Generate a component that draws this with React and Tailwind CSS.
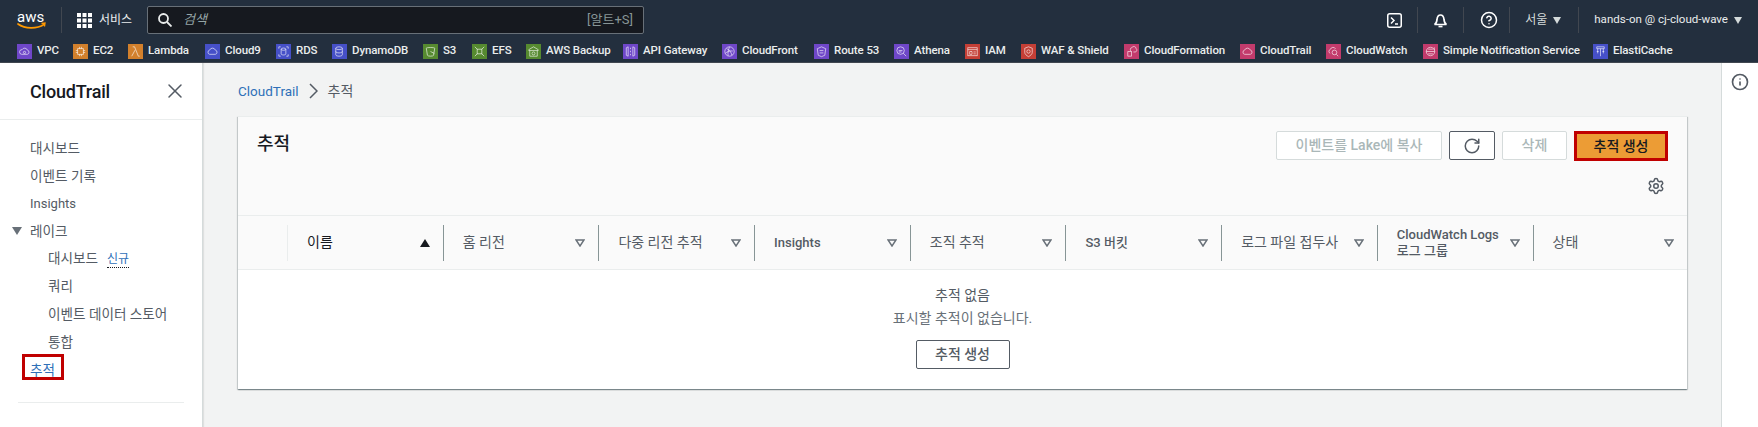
import React from 'react';
import { RotateCw, Settings, X, HelpCircle, Info } from 'lucide-react';

const FONT = "font-['Roboto','Noto_Sans_CJK_KR',sans-serif]";

// glyph drawn in white on each service tile (16 box)
const glyphs = {
  vpc: <><path d="M5 11a2.5 2.5 0 0 1 .5-5 3 3 0 0 1 5.5.5 2.3 2.3 0 0 1 0 4.5z" /><circle cx="8" cy="9" r="1.2" /></>,
  ec2: <><rect x="5" y="5" width="6" height="6" /><path d="M7 3v2M9 3v2M7 11v2M9 11v2M3 7h2M3 9h2M11 7h2M11 9h2" /></>,
  lambda: <path d="M5 3h2l4 10h1.5M7.5 6.5 4 13" />,
  cloud9: <path d="M5 11a2.3 2.3 0 0 1 0-4.5 3.2 3.2 0 0 1 6 0 2.3 2.3 0 0 1 0 4.5z" />,
  rds: <><ellipse cx="8" cy="5.5" rx="2.5" ry="1.2" /><path d="M5.5 5.5v5c0 .7 1.1 1.2 2.5 1.2s2.5-.5 2.5-1.2v-5M3 3v2M3 3h2M13 3v2M13 3h-2M3 13v-2M3 13h2M13 13v-2M13 13h-2" /></>,
  dynamo: <><ellipse cx="7.5" cy="4.5" rx="3.5" ry="1.5" /><path d="M4 4.5v7c0 .8 1.6 1.5 3.5 1.5s3.5-.7 3.5-1.5v-7M4 8c0 .8 1.6 1.5 3.5 1.5S11 8.800 11 8" /></>,
  s3: <><path d="M3.500 4.500c0-1 9-1 9 0l-1.200 7.500c-.3 1.300-6.300 1.300-6.600 0z" /><path d="M8 8l4 2" /></>,
  efs: <><rect x="5.500" y="5.500" width="5" height="5" /><path d="M3 3l2.500 2.500M13 3l-2.500 2.500M3 13l2.500-2.500M13 13l-2.500-2.500" /></>,
  backup: <><path d="M8 3l5 3v1H3V6zM4 7v6h8V7" /><circle cx="8" cy="10" r="1.600" /></>,
  api: <path d="M3.500 4v8l2 1V3zM12.500 4v8l-2 1V3zM8 4v1.500M8 7.200v1.600M8 10.500V12" />,
  front: <><circle cx="8" cy="8" r="5" /><path d="M5 5c3 1 5 4 5.500 7M3.500 10c2-2 5-3 8-2.500M8 3c-1 3-2 6-1.500 9.500" /></>,
  route53: <><path d="M8 3l4.500 2-1 7L8 13.500 4.500 12l-1-7z" /><path d="M6 7h4M6 9.500h4" /></>,
  athena: <><circle cx="7" cy="7" r="4" /><path d="M10 10l3 3M5 7h4M5 8.500h3" /></>,
  iam: <><rect x="3" y="4" width="10" height="8.500" /><path d="M3 6h10M5 8h2.500v3H5zM9 8.500h2.500M9 10.500h2.500" /></>,
  waf: <><path d="M8 3l4 1.500V9c0 2-2 3.300-4 4.500C6 12.300 4 11 4 9V4.500z" /><circle cx="8" cy="8" r="1.800" /></>,
  formation: <><path d="M4 13V8h4v5zM8 8a2.300 2.300 0 0 1 .5-4.300A2.500 2.500 0 0 1 13 5a2 2 0 0 1-1 3.500h-2" /></>,
  trail: <path d="M5 11a2.300 2.300 0 0 1 0-4.500 3.200 3.200 0 0 1 6 0 2.300 2.300 0 0 1 0 4.500z" />,
  watch: <><path d="M4.500 10a2.300 2.300 0 0 1 .2-4.300 3 3 0 0 1 5.500-.5" /><circle cx="9" cy="9" r="2.500" /><path d="M11 11l2 2" /></>,
  sns: <><circle cx="8" cy="8" r="4.500" /><path d="M3.500 8h9M5.500 5.500h5M5.500 10.500h5M12 3.500v3" /></>,
  cache: <path d="M4 3h8v2H4zM5 5v5M8 5v8M11 5v5M4 8h2M10 8h2" />,
};

const PURPLE = 'bg-[#6f47c9]';
const ORANGE = 'bg-[#d2802c]';
const BLUE = 'bg-[#4650c8]';
const GREEN = 'bg-[#568a30]';
const RED = 'bg-[#c43f36]';
const PINK = 'bg-[#c23b6c]';

// [name, glyph, tile colour, slot width up to the next tile]
const bookmarks = [
  ['VPC', 'vpc', PURPLE, 56],
  ['EC2', 'ec2', ORANGE, 55],
  ['Lambda', 'lambda', ORANGE, 77],
  ['Cloud9', 'cloud9', BLUE, 71],
  ['RDS', 'rds', BLUE, 56],
  ['DynamoDB', 'dynamo', BLUE, 91],
  ['S3', 's3', GREEN, 49],
  ['EFS', 'efs', GREEN, 54],
  ['AWS Backup', 'backup', GREEN, 97],
  ['API Gateway', 'api', PURPLE, 99],
  ['CloudFront', 'front', PURPLE, 92],
  ['Route 53', 'route53', PURPLE, 80],
  ['Athena', 'athena', PURPLE, 71],
  ['IAM', 'iam', RED, 56],
  ['WAF & Shield', 'waf', RED, 103],
  ['CloudFormation', 'formation', PINK, 116],
  ['CloudTrail', 'trail', PINK, 86],
  ['CloudWatch', 'watch', PINK, 97],
  ['Simple Notification Service', 'sns', PINK, 170],
  ['ElastiCache', 'cache', BLUE, 90],
];

const columns = [
  { label: '이름', sort: 'asc', size: 'text-[14px]' },
  { label: '홈 리전', size: 'text-[14px]' },
  { label: '다중 리전 추적', size: 'text-[14px]' },
  { label: 'Insights', size: 'text-[13px] font-medium' },
  { label: '조직 추적', size: 'text-[14px]' },
  { label: 'S3 버킷', size: 'text-[13px] font-medium' },
  { label: '로그 파일 접두사', size: 'text-[14px]' },
  { label: 'CloudWatch Logs 로그 그룹', size: 'text-[13px] font-medium', wrap: true },
  { label: '상태', size: 'text-[14px]', last: true },
];

function Caret({ className }) {
  return <span className={`w-0 h-0 border-x-[4px] border-x-transparent border-t-[7px] ${className}`} />;
}

function NavDivider() {
  return <span className="block w-px h-[26px] bg-[#414750]" />;
}

function TopBar() {
  return (
    <div className="h-[40px] flex items-center text-[#d5dbdb] text-[12px] pl-[17px] whitespace-nowrap">
      <svg className="-mr-[4px]" width="34" height="20" viewBox="0 0 34 20" fill="none">
        <text x="0" y="12" fontSize="15" fill="#fff" fontFamily="Roboto, sans-serif">aws</text>
        <path d="M1 14c7 5 19 5 26 .5" stroke="#f90" strokeWidth="1.700" strokeLinecap="round" />
        <path d="M24.500 13.500l3.500-.5-.5 3.500" stroke="#f90" strokeWidth="1.300" />
      </svg>
      <span className="w-px h-[26px] bg-[#414750] ml-[14px]" />
      <svg className="ml-[15px]" width="15" height="15" viewBox="0 0 15 15" fill="#fff">
        {[0, 5.5, 11].map((y) =>
          [0, 5.5, 11].map((x) => <rect key={`${x}-${y}`} x={x} y={y} width="4" height="4" />)
        )}
      </svg>
      <span className="ml-[7px] w-[33px] text-[#eaeded]">서비스</span>
      <div className="ml-[15px] w-[497px] h-[28px] bg-[#16191f] border border-[#687078] rounded-[2px] flex items-center pl-[10px] pr-[10px] shrink-0">
        <svg width="14" height="14" viewBox="0 0 14 14" fill="none" stroke="#eaeded" strokeWidth="1.800">
          <circle cx="5.500" cy="5.500" r="4.500" />
          <path d="M9 9l4.500 4.500" />
        </svg>
        <span className="ml-[11px] text-[13px] italic text-[#95a5a6]">검색</span>
        <span className="ml-auto text-[13px] text-[#879596]">[알트+S]</span>
      </div>
      <div className="ml-auto flex items-center h-full pr-[16px]">
        <svg width="15" height="15" viewBox="0 0 15 15" fill="none" stroke="#fff" strokeWidth="1.500">
          <rect x="0.750" y="0.750" width="13.500" height="13.500" rx="2" />
          <path d="M4 4.500l3 3-3 3M8 11h3" />
        </svg>
        <span className="mx-[15px]"><NavDivider /></span>
        <svg width="15" height="15" viewBox="0 0 15 15" fill="none" stroke="#fff" strokeWidth="1.700">
          <path d="M1.500 11.500c2-1 2.200-3 2.500-5C4.300 3.500 5.500 2 7.500 2s3.200 1.500 3.500 4.500c.3 2 .5 4 2.500 5z" />
          <path d="M5.500 13.500h4" />
        </svg>
        <span className="ml-[15px] mr-[17px]"><NavDivider /></span>
        <HelpCircle className="-mx-[1.500px]" size={18} color="#fff" strokeWidth={2} />
        <span className="ml-[13px] mr-[15px]"><NavDivider /></span>
        <span className="text-[#d5dbdb] w-[22px]">서울</span>
        <Caret className="border-t-[#d5dbdb] ml-[6px]" />
        <span className="ml-[17px] mr-[15px]"><NavDivider /></span>
        <span className="text-[11.550px] text-[#eaeded]">hands-on @ cj-cloud-wave</span>
        <Caret className="border-t-[#d5dbdb] ml-[6px]" />
      </div>
    </div>
  );
}

function BookmarkBar() {
  return (
    <div className="h-[23px] flex items-center pl-[17px] text-[11.500px] tracking-[-0.1px] font-medium text-[#eaeded] border-b border-[#414750] whitespace-nowrap">
      {bookmarks.map(([name, glyph, tint, slot]) => (
        <div key={name} className="flex items-center shrink-0" style={{ width: slot }}>
          <span className={`w-[15px] h-[15px] mr-[5px] shrink-0 ${tint}`}>
            <svg width="15" height="15" viewBox="0 0 16 16" fill="none" stroke="rgba(255,255,255,0.8)" strokeWidth="0.800">
              {glyphs[glyph]}
            </svg>
          </span>
          <span>{name}</span>
        </div>
      ))}
    </div>
  );
}

function SideLink({ children, sub, active, latin }) {
  return (
    <div className={`h-[28px] flex items-center ${latin ? 'text-[13px]' : 'text-[13.600px]'} ${sub ? 'pl-[48px]' : 'pl-[30px]'} ${active ? 'text-[#2f70b8]' : 'text-[#545b64]'}`}>
      {children}
    </div>
  );
}

function Sidebar() {
  return (
    <aside className="w-[203px] shrink-0 bg-white border-r border-[#d5dbdb] shadow-[1px_0_1px_rgba(0,0,0,0.08)]">
      <div className="h-[57px] flex items-center justify-between pl-[30px] pr-[15px] border-b border-[#eaeded]">
        <span className="text-[18px] tracking-[-0.2px] font-medium text-[#16191f]">CloudTrail</span>
        <X size={24} color="#545b64" strokeWidth={1.500} />
      </div>
      <nav className="pt-[14px]">
        <SideLink>대시보드</SideLink>
        <SideLink>이벤트 기록</SideLink>
        <SideLink latin>Insights</SideLink>
        <div className="h-[26px] flex items-center pl-[12px] text-[13.600px] text-[#545b64]">
          <Caret className="border-t-[#687078] !border-x-[5px] !border-t-[8px]" />
          <span className="ml-[8px]">레이크</span>
        </div>
        <SideLink sub>
          대시보드
          <span className="ml-[9px] text-[12px] text-[#2f70b8] border-b border-dotted border-[#16191f] leading-[15px] mt-[3px]">신규</span>
        </SideLink>
        <SideLink sub>쿼리</SideLink>
        <SideLink sub>이벤트 데이터 스토어</SideLink>
        <SideLink sub>통합</SideLink>
        <SideLink active>
          <span className="relative">
            추적
            <span className="absolute left-[-8px] top-[-6px] w-[42px] h-[26px] border-[3px] border-[#c00000]" />
          </span>
        </SideLink>
      </nav>
      <div className="mx-[18px] mt-[18px] border-t border-[#eaeded]" />
    </aside>
  );
}

function HeaderCell({ col, index }) {
  const first = index === 0;
  return (
    <div className={`h-[36px] flex items-center pl-[19px] pr-[13px] ${col.last ? 'w-[154px]' : 'w-[155.700px]'} border-l ${first ? 'border-[#eaeded]' : 'border-[#879596]'}`}>
      <span className={`flex-1 ${col.size} ${first ? 'text-[#16191f]' : 'text-[#545b64]'} ${col.wrap ? 'leading-[16px]' : ''}`}>
        {col.label}
      </span>
      {col.sort ? (
        <span className="w-0 h-0 border-x-[5px] border-x-transparent border-b-[8px] border-b-[#16191f]" />
      ) : (
        <svg width="10" height="8" viewBox="0 0 10 8" fill="none" stroke="#687078" strokeWidth="1.500">
          <path d="M1 1h8L5 7z" />
        </svg>
      )}
    </div>
  );
}

function TrailsCard() {
  return (
    <section className="mt-[14px] bg-white border-t border-[#eaeded] shadow-[0_1px_1px_0_rgba(0,28,36,0.3),1px_1px_1px_0_rgba(0,28,36,0.15),-1px_1px_1px_0_rgba(0,28,36,0.15)]">
      <div className="bg-[#fafafa] h-[99px] px-[19px] border-b border-[#eaeded] flex justify-between">
        <h1 className="text-[18px] font-medium text-[#16191f] pt-[13px]">추적</h1>
        <div className="pt-[14px] flex flex-col items-end">
          <div className="flex gap-[7px] text-[14px] font-medium">
            <button className="w-[166px] h-[29px] bg-white border border-[#d5dbdb] rounded-[2px] text-[#aab7b8]">이벤트를 Lake에 복사</button>
            <button className="w-[46px] h-[29px] bg-white border border-[#545b64] rounded-[2px] flex items-center justify-center text-[#545b64]">
              <RotateCw size={18} strokeWidth={2} />
            </button>
            <button className="w-[65px] h-[29px] bg-white border border-[#d5dbdb] rounded-[2px] text-[#aab7b8]">삭제</button>
            <button className="w-[94px] h-[30px] bg-[#ec9c35] border-[3px] border-[#c00000] text-[#16191f]">추적 생성</button>
          </div>
          <Settings className="mt-[16px] mr-[3px]" size={18} color="#545b64" strokeWidth={2} />
        </div>
      </div>
      <div className="bg-[#fafafa] h-[54px] border-b border-[#eaeded] flex items-center pl-[49px]">
        {columns.map((col, i) => (
          <HeaderCell key={col.label} col={col} index={i} />
        ))}
      </div>
      <div className="h-[119px] flex flex-col items-center pt-[15px] text-[14px]">
        <div className="leading-[20px] text-[#545b64]">추적 없음</div>
        <div className="leading-[20px] mt-[3px] text-[#687078]">표시할 추적이 없습니다.</div>
        <button className="mt-[12px] w-[94px] h-[29px] border border-[#545b64] rounded-[2px] font-medium text-[#545b64]">추적 생성</button>
      </div>
    </section>
  );
}

export default function App() {
  return (
    <div className={`w-[1758px] h-[427px] flex flex-col overflow-hidden bg-[#f2f3f3] ${FONT}`}>
      <header className="bg-[#232f3e] shrink-0">
        <TopBar />
        <BookmarkBar />
      </header>
      <div className="flex flex-1 min-h-0">
        <Sidebar />
        <main className="flex-1 pl-[35px] pr-[34px] pt-[17px]">
          <div className="h-[22px] flex items-center text-[13.500px] text-[#545b64]">
            <span className="text-[#2f70b8]">CloudTrail</span>
            <svg className="mx-[10px]" width="9" height="16" viewBox="0 0 9 16" fill="none" stroke="#545b64" strokeWidth="1.500">
              <path d="M1 1l7 7-7 7" />
            </svg>
            <span className="text-[14px]">추적</span>
          </div>
          <TrailsCard />
        </main>
        <aside className="w-[37px] shrink-0 bg-white border-l border-[#d5dbdb] flex justify-center pt-[10px]">
          <Info size={18} color="#545b64" strokeWidth={2.200} />
        </aside>
      </div>
    </div>
  );
}
